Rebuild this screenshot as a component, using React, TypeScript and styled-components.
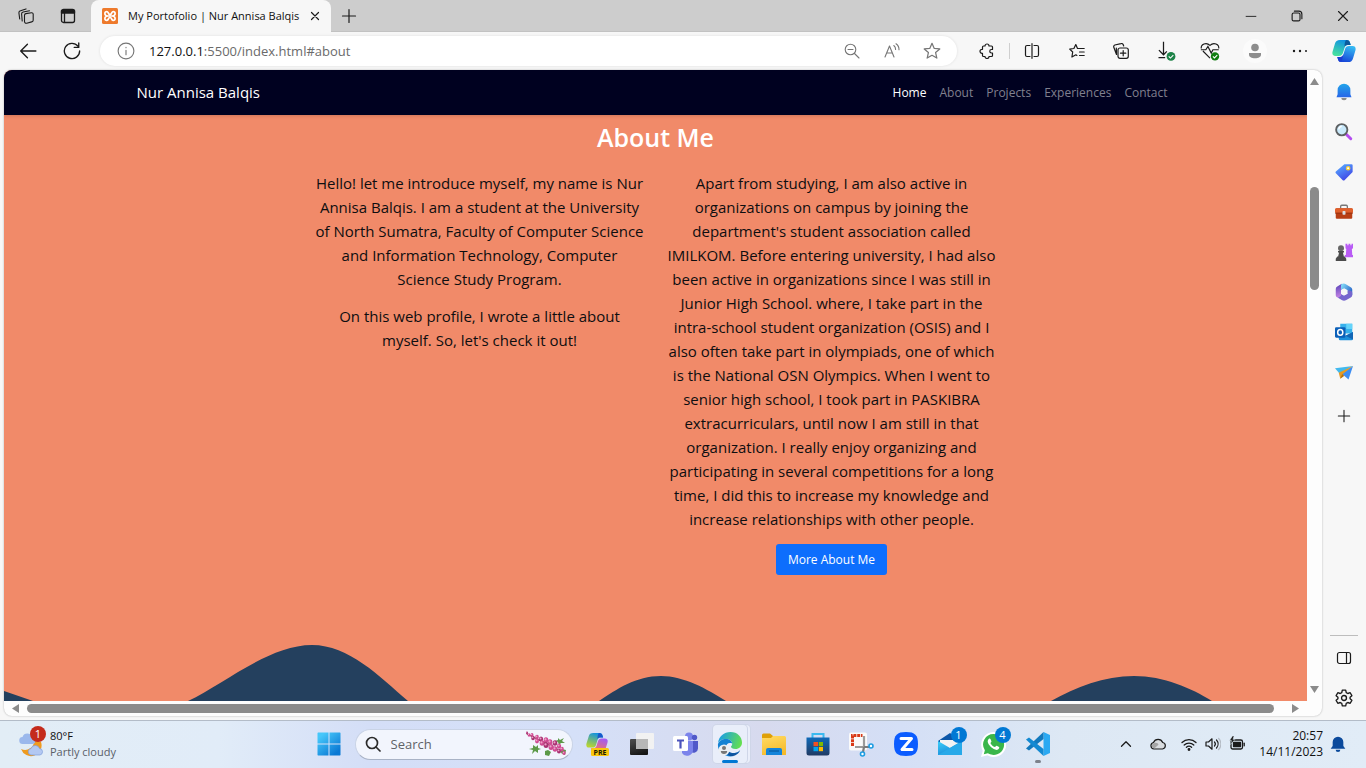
import React from "react";
import styled, { createGlobalStyle, css } from "styled-components";

const GlobalStyle = createGlobalStyle`
  *, *::before, *::after { box-sizing: border-box; }
  html, body { margin: 0; padding: 0; }
  body { font-family: "Open Sans", "Noto Sans", sans-serif; color: #111; }
  button { font: inherit; color: inherit; background: none; border: 0; padding: 0; cursor: pointer; }
  input { font: inherit; color: inherit; background: none; border: 0; padding: 0; outline: 0; min-width: 0; }
  a { color: inherit; text-decoration: none; }
  svg { display: block; flex: none; }
`;

const Desktop = styled.div`
  display: flex;
  flex-direction: column;
  height: 100vh;
  min-height: 560px;
  overflow: hidden;
  background: #f7f7f7;
`;

/* ---------- tab strip ---------- */
const TabStrip = styled.header`
  display: flex;
  flex: none;
  height: 32px;
  background: #cdcdcd;
  box-shadow: inset 0 -1px 0 #c2c2c2;
`;
const StripButtons = styled.div`
  display: flex;
  width: 91px;
  padding-left: 5px;
`;
const IconButton = styled.button<{ $width?: number }>`
  display: flex;
  align-items: center;
  justify-content: center;
  flex: none;
  width: ${(p) => p.$width ?? 44}px;
  height: 100%;
`;
const Tab = styled.div`
  display: flex;
  align-items: center;
  width: 240px;
  padding: 0 8px 0 11px;
  border-radius: 8px 8px 0 0;
  background: #f7f7f7;
`;
const TabTitle = styled.span`
  flex: 1;
  margin-left: 10px;
  font-size: 11px;
  line-height: 16px;
  white-space: nowrap;
`;
const WindowControls = styled.div`
  display: flex;
  margin-left: auto;
`;

/* ---------- toolbar ---------- */
const Toolbar = styled.div`
  display: flex;
  align-items: center;
  flex: none;
  height: 38px;
  padding-left: 6px;
`;
const AddressBar = styled.form`
  display: flex;
  align-items: center;
  flex: 1;
  height: 30px;
  margin: 0 8px 0 6px;
  padding: 0 5px 0 17px;
  border-radius: 15px;
  background: #fff;
  box-shadow: 0 0 3px rgba(0, 0, 0, 0.1);
  font-size: 13px;
  line-height: 20px;
`;
const Host = styled.label`
  margin-left: 14px;
`;
const UrlInput = styled.input`
  flex: 1;
  color: #6a6a6a;
`;
const Divider = styled.span`
  width: 1px;
  height: 16px;
  background: #cfcfcf;
`;
const ToolbarActions = styled.div`
  display: flex;
  height: 38px;
  width: 356px;
  & > button { flex: 1; width: auto; }
`;

/* ---------- browser body ---------- */
const Body = styled.div`
  display: flex;
  flex: 1;
  min-height: 0;
  padding: 0 0 4px 4px;
`;
const Frame = styled.div`
  display: grid;
  grid-template: minmax(0, 1fr) 15px / minmax(0, 1fr) 15px;
  flex: 1;
  overflow: hidden;
  border-radius: 8px;
  background: #fdfdfd;
  box-shadow: 0 0 2px rgba(0, 0, 0, 0.3);
`;
const VerticalScroll = styled.div`
  display: flex;
  flex-direction: column;
  align-items: center;
  padding: 7px 0;
`;
const HorizontalScroll = styled.div`
  display: flex;
  align-items: center;
  padding: 0 7px;
`;
const Thumb = styled.span<{ $vertical?: boolean }>`
  border-radius: 5px;
  background: #8b8b8b;
  ${(p) =>
    p.$vertical
      ? css`width: 9px; height: 103px; margin: 101px 0 auto;`
      : css`flex: 1; height: 9px; margin: 0 17px 0 7px;`}
`;
const Sidebar = styled.aside`
  display: flex;
  flex-direction: column;
  flex: none;
  width: 44px;
  padding-top: 2px;
  margin-bottom: -2px;
  & > button { height: 40px; }
`;
const AddSlot = styled.div`
  height: 40px;
  margin-top: 4px;
`;
const SidebarRule = styled.span`
  width: 28px;
  height: 1px;
  margin: auto 8px 2px;
  background: #bdbdbd;
`;

/* ---------- portfolio page ---------- */
const Page = styled.div`
  display: flex;
  flex-direction: column;
  overflow: hidden;
  background: #f18a69;
`;
const Navbar = styled.nav`
  flex: none;
  background: #000120;
  box-shadow: 0 1px 3px rgba(0, 0, 0, 0.15);
`;
const NavInner = styled.div`
  display: flex;
  align-items: center;
  justify-content: space-between;
  max-width: 1038px;
  height: 45px;
  margin: 0 auto;
  padding-right: 7px;
`;
const Brand = styled.a`
  padding-bottom: 2px;
  color: #fff;
  font-size: 15px;
  line-height: 24px;
`;
const NavLinks = styled.div`
  display: flex;
  gap: 13px;
  font-size: 12px;
  line-height: 20px;
`;
const NavLink = styled.a<{ $active?: boolean }>`
  color: ${(p) => (p.$active ? "#fff" : "#80808f")};
`;
const About = styled.section`
  flex: none;
  padding-top: 6px;
  text-align: center;
  color: #0e0e10;
`;
const Heading = styled.h1`
  margin: 0 0 18px;
  color: #fff;
  font-size: 25px;
  font-weight: 600;
  line-height: 32px;
`;
const Columns = styled.div`
  display: grid;
  grid-template-columns: repeat(2, 352px);
  justify-content: center;
  font-size: 15px;
  line-height: 24px;
`;
const Paragraph = styled.p`
  margin: 0 0 13px;
  white-space: nowrap;
`;
const MoreButton = styled.a`
  display: inline-block;
  padding: 0 12px;
  border-radius: 3px;
  background: #0d6efd;
  color: #fff;
  font-size: 12px;
  line-height: 31px;
`;
const Wave = styled.svg`
  width: 100%;
  height: 57px;
  margin-top: auto;
`;

/* ---------- taskbar ---------- */
const Taskbar = styled.footer`
  display: grid;
  grid-template-columns: 1fr auto 1fr;
  align-items: center;
  flex: none;
  height: 48px;
  padding-bottom: 1px;
  border-top: 1px solid #b3bcc8;
  background: linear-gradient(90deg, #e2edf6 0%, #e1ecf8 16%, #d4def7 27%, #d5e0f8 42%, #d7daee 56%, #d4dff6 66%, #dde8f4 78%, #e1ecf7 100%);
`;
const Weather = styled.button`
  display: flex;
  align-items: center;
  justify-self: start;
  gap: 5px;
  padding-left: 17px;
  font-size: 11px;
  line-height: 16px;
  text-align: left;
`;
const Muted = styled.span`
  display: block;
  color: #5a6068;
`;
const TaskIcons = styled.div`
  display: flex;
  align-items: center;
  height: 46px;
`;
const SearchBox = styled.label`
  display: flex;
  align-items: center;
  width: 218px;
  height: 31px;
  margin: 0 3px 0 4px;
  padding: 0 5px 0 9px;
  border: 1px solid #c9d3e6;
  border-bottom-color: #a9b3c6;
  border-radius: 16px;
  background: #f2f5fd;
  font-size: 13px;
  line-height: 18px;
  input { flex: 1; margin-left: 10px; }
  input::placeholder { color: #5f6368; opacity: 1; }
`;
const TaskButton = styled.button<{ $open?: boolean }>`
  position: relative;
  display: flex;
  align-items: center;
  justify-content: center;
  width: 44px;
  height: 46px;
  ${(p) =>
    p.$open &&
    css`
      width: 34px;
      height: 38px;
      margin: 0 5px;
      border-radius: 4px;
      background: #e9eefa;
      box-shadow: 0 0 0 1px #cfd6e8, 3px 0 0 0 #eaeefa, 3px 0 0 1px #cfd6e8;
    `}
`;
const Indicator = styled.span<{ $active?: boolean }>`
  position: absolute;
  bottom: ${(p) => (p.$active ? 0 : 4)}px;
  left: 50%;
  width: ${(p) => (p.$active ? 16 : 6)}px;
  height: 3px;
  border-radius: 2px;
  background: ${(p) => (p.$active ? "#0078d4" : "#7d828c")};
  transform: translateX(-50%);
`;
const Badge = styled.span<{ $red?: boolean }>`
  position: absolute;
  top: ${(p) => (p.$red ? -4 : 6)}px;
  right: ${(p) => (p.$red ? -1 : 5)}px;
  width: 16px;
  height: 16px;
  border-radius: 50%;
  background: ${(p) => (p.$red ? "#c42b1c" : "#0078d4")};
  color: #fff;
  font-size: 11px;
  line-height: 16px;
  text-align: center;
`;
const WeatherIcon = styled.span`
  position: relative;
  display: block;
`;
const Tray = styled.div`
  display: flex;
  align-items: center;
  justify-self: end;
  height: 46px;
  padding-right: 20px;
`;
const Clock = styled.time`
  margin: 0 7px;
  font-size: 12px;
  line-height: 16px;
  text-align: right;
  span { display: block; }
`;

/* ---------- icons ---------- */
type IconProps = { size?: number; color?: string; width?: number; children: React.ReactNode };
const Line = ({ size = 16, color = "#1b1b1b", width = 1.2, children }: IconProps) => (
  <svg width={size} height={size} viewBox="0 0 16 16" fill="none" stroke={color} strokeWidth={width} strokeLinecap="round" strokeLinejoin="round" aria-hidden="true">
    {children}
  </svg>
);
const Art = ({ size = 18, children }: { size?: number; children: React.ReactNode }) => (
  <svg width={size} height={size} viewBox="0 0 24 24" aria-hidden="true">{children}</svg>
);
const starPath = "M8 1.2l2 4.5 4.9.5-3.7 3.2 1.1 4.900L8 11.800l-4.300 2.500 1.100-4.900L1.100 6.200 6 5.700z";

const Gradient = ({ id, from, to, angle = 0 }: { id: string; from: string; to: string; angle?: number }) => (
  <linearGradient id={id} gradientTransform={`rotate(${angle} .5 .5)`}>
    <stop stopColor={from} />
    <stop offset="1" stopColor={to} />
  </linearGradient>
);

const CopilotArt = ({ size = 24, warm = false }: { size?: number; warm?: boolean }) => {
  const k = warm ? "w" : "c";
  return (
    <Art size={size}>
      <defs>
        <Gradient id={`${k}1`} from="#0f91e3" to={warm ? "#b8d432" : "#46dfa0"} angle={110} />
        <Gradient id={`${k}2`} from={warm ? "#a45cf0" : "#35b8f2"} to={warm ? "#ff7a4d" : "#1746d8"} angle={110} />
      </defs>
      <path d="M8 1h7c2 0 2.600 1.200 3.100 3l.6 2h-3c-2 0-2.700 1.300-3.300 3.200l-1.300 4.400C10.300 16 9.300 17 7 17H3.500C.6 17-.1 14.900.6 12.400L3 4.600C3.700 2.200 5 1 8 1z" fill={`url(#${k}1)`} />
      <path d="M14 1c2.600 0 3.500 1 4.100 3l.6 2h-3.300c-1.300 0-2.100.7-2.700 1.800C12.300 5 13 2.500 14 1z" fill={warm ? "#1858cc" : "#0b5b9c"} />
      <path d="M17 7h3.500c2.900 0 3.600 2.100 2.900 4.600L21 19.400C20.300 21.800 19 23 16 23H9c-2 0-2.600-1.200-3.100-3l-.6-2h3c2 0 2.700-1.300 3.300-3.200l1.300-4.400C13.700 8 14.700 7 17 7z" fill={`url(#${k}2)`} />
      <path d="M5.300 18h3c2 0 2.700-1.300 3.300-3.200L10 21c-.5 1.500-1.600 2-2.300 1.700-1-.5-1.400-1.500-1.800-2.700z" fill={warm ? "#f26a9c" : "#1b3ed0"} />
    </Art>
  );
};

const Lupin = () => (
  <svg width="42" height="26" viewBox="0 0 42 26" aria-hidden="true">
    <path d="M2 3Q18 11 40 22" stroke="#8a5a58" strokeWidth="1.300" fill="none" />
    <path fill="#5d9a48" d="M8 14l3 2 2-2 0 3 3 1-3 1 0 3-3-2-3 3 1-4-4-1 4-1zM33 7l2 2 4-2-2 3 3 2-4 0-2 2-1-3-3-1 3-1zM20 20l3-1 3 2-2 4-4-1zM37 18l4 1-1 5-4-2z" />
    {[[2, 2, 1], [4, 4, 1.400], [7, 4, 1.500], [8, 7, 1.800], [12, 6, 1.800], [12, 10, 2], [16, 8, 2.200], [17, 12, 2.300], [21, 9, 2.300], [21, 14, 2.500], [25, 11, 2.400], [26, 16, 2.500], [30, 12, 2.300], [30, 18, 2.300], [34, 15, 2.200], [34, 20, 2.100], [37, 18, 1.800], [39, 22, 1.700]].map(([x, y, r], i) => (
      <g key={i}>
        <ellipse cx={x} cy={y} rx={r} ry={r + 0.4} fill={i % 3 ? "#cf4a91" : "#a93272"} />
        <circle cx={x - 0.5} cy={y - 0.6} r={r * 0.45} fill="#eea0c8" />
      </g>
    ))}
  </svg>
);

const Arrow = ({ d, label }: { d: string; label: string }) => (
  <button type="button" aria-label={label}>
    <svg width="9" height="9" viewBox="0 0 9 9"><path d={d} fill="#8b8b8b" /></svg>
  </button>
);

const toolbarIcons: { label: string; icon: React.ReactNode }[] = [
  { label: "Split screen", icon: <Line><path d="M6 2.500H3A1.500 1.500 0 0 0 1.500 4v8A1.500 1.500 0 0 0 3 13.500h3M10 2.500h3A1.500 1.500 0 0 1 14.500 4v8a1.500 1.500 0 0 1-1.500 1.500h-3M8 .7v14.600" /></Line> },
  { label: "Favorites", icon: <Line><path d="M8.500 5.500L6.800 1.500l-1.900 4-4.200.6L3.700 9l-.8 5 4-2.200 1 .6M8.500 5.500h6.700M10.500 9h4.700M10.500 12.500h4.700" /></Line> },
  { label: "Collections", icon: <Line><rect x="5" y="5" width="10.300" height="10.300" rx="2" /><path d="M10.200 7.500v5.300M7.500 10.200h5.300M3.400 11.300L.8 4.200a1.700 1.700 0 0 1 1-2.200L8 .6a1.700 1.700 0 0 1 2.200 1.200l.5 1.200M3.500 11.400L3.300 5" /></Line> },
  { label: "Downloads", icon: <Art size={20}><path d="M9 1v15M3.500 11L9 16.500l4-4M3 20h8" fill="none" stroke="#1b1b1b" strokeWidth="1.500" /><circle cx="18" cy="18.500" r="5.300" fill="#1d8348" /><path d="M15.300 18.500l2 2 3.500-3.500" fill="none" stroke="#fff" strokeWidth="1.300" /></Art> },
  { label: "Browser essentials", icon: <Art size={20}><path d="M12 20.500L3.500 12M1.500 9C.8 4 7.500.8 12 5.300 16.500.8 23.200 4 22.500 9M1 10.500h6l2.500-4 4 8 2-4h7" fill="none" stroke="#1b1b1b" strokeWidth="1.400" /><circle cx="18" cy="18.500" r="5" fill="#107c10" /><path d="M15.500 18.500l1.800 1.800 3.400-3.400" fill="none" stroke="#fff" strokeWidth="1.300" /></Art> },
  { label: "Profile", icon: <svg width="24" height="24" viewBox="0 0 24 24"><circle cx="12" cy="12" r="12" fill="#fbfbfb" /><circle cx="12" cy="8.500" r="3.800" fill="#8d8d8d" /><path d="M6 14h12v1.500c0 2.500-2.500 3.700-6 3.700s-6-1.200-6-3.700z" fill="#8d8d8d" /></svg> },
  { label: "Settings and more", icon: <Line><g fill="#1b1b1b" stroke="none"><circle cx="3" cy="8" r="1.200" /><circle cx="9" cy="8" r="1.200" /><circle cx="15" cy="8" r="1" /></g></Line> },
  { label: "Copilot", icon: <CopilotArt /> },
];

const sidebarIcons: { label: string; icon: React.ReactNode }[] = [
  { label: "Notifications", icon: <Art><defs><Gradient id="bell" from="#22a5ea" to="#2866e8" angle={90} /></defs><path d="M12 1a8.500 8.500 0 0 0-8.500 8.500V15L2 19h20l-1.500-4V9.500A8.500 8.500 0 0 0 12 1z" fill="url(#bell)" /><path d="M8.500 20h7a3.500 3 0 0 1-7 0z" fill="#8b8b8b" /></Art> },
  { label: "Search", icon: <Art><path d="M15 15l6 6" stroke="#b44cf0" strokeWidth="4" strokeLinecap="round" /><circle cx="9" cy="9" r="7.500" fill="#c9e9fb" stroke="#5d6062" strokeWidth="2.500" /><path d="M5 8.500A4.500 4.500 0 0 1 9 4.500" stroke="#fff" strokeWidth="1.500" fill="none" /></Art> },
  { label: "Shopping", icon: <Art><defs><Gradient id="tag" from="#56a4ff" to="#3f43e4" angle={60} /></defs><path d="M12.500 1.500H22a1.500 1.500 0 0 1 1.500 1.500v9L13 22.500a2 2 0 0 1-3 0L1.500 14a2 2 0 0 1 0-3z" fill="url(#tag)" /><circle cx="17.500" cy="7" r="2.300" fill="#fff" stroke="#f4cd3c" strokeWidth="1.700" /></Art> },
  { label: "Tools", icon: <Art><path d="M7.500 7V4.500C7.500 3.500 8 3 9 3h6c1 0 1.500.5 1.500 1.500V7" fill="none" stroke="#777" strokeWidth="1.700" /><rect x="1" y="7" width="22" height="14" rx="1.500" fill="#b73e14" /><path d="M1.500 7h21A1.500 1.500 0 0 1 24 8.500V13H0V8.500A1.500 1.500 0 0 1 1.500 7z" fill="#e0602c" /><path d="M0 13h24v1H0z" fill="#8e2c0d" /><rect x="10" y="10.500" width="4" height="5" rx="1" fill="#d9dee2" /></Art> },
  { label: "Games", icon: <Art><path d="M14 1h2.500v2H18V1h2.500v2H22V1h2v6l-1.500 1 .5 8h1v3H13v-3h1.500l.5-8-1-1z" fill="#b95cf5" /><circle cx="8" cy="7" r="4" fill="#666" /><path d="M4 10.500h8v2h-1.500l1.500 6H4l1.500-6H4zM3 18h10l2 3v3H1v-3z" fill="#4b4b4b" /></Art> },
  { label: "Microsoft 365", icon: <Art><defs><Gradient id="m1" from="#7ed4f5" to="#2b67c9" angle={30} /><Gradient id="m2" from="#5b45b9" to="#d18bea" angle={80} /></defs><path d="M9 1L3 4.500A4 4 0 0 0 1 8v8c0 2 1 3 3 3.500l4 1V9l5-3z" fill="url(#m2)" /><path d="M8.500 1.500c2-1 4-1 6 0l6.500 4C22.500 6.500 23 7.500 23 9v7l-6-2.500V9.700L12 7 8 9.300V3c0-.7 0-1.200.5-1.500z" fill="url(#m1)" /><path d="M23 13v3c0 1.500-.7 2.500-2 3.300L14.500 23c-1.500.8-3.500.8-5 0L4 19.800l4-2.800V14.500l4 2.300 5-2.500V9.500l4.500 1c1 .5 1.500 1.500 1.500 2.500z" fill="#7666ce" /><path d="M12 7.500l4 2.200v4.500l-4 2.300-4-2.300V9.700z" fill="#f7f7f7" /></Art> },
  { label: "Outlook", icon: <Art><rect x="7" y="1" width="16" height="13" fill="#37b1ec" /><path d="M15 1h8v7h-8z" fill="#64d4fa" /><path d="M5 12l9 5 10-5v9a2 2 0 0 1-2 2H7a2 2 0 0 1-2-2z" fill="#1c8fdb" /><path d="M24 12v10L14 17z" fill="#1266b5" /><rect x="0" y="5.500" width="14" height="14" rx="1.500" fill="#0a5fb8" /><ellipse cx="7" cy="12.500" rx="3.400" ry="3.800" fill="none" stroke="#fff" strokeWidth="2" /></Art> },
  { label: "Drop", icon: <Art><path d="M0 7L24 4 6 14z" fill="#42b9ee" /><path d="M24 4L5 13l2 8 4-5z" fill="#e79b23" /><path d="M24 4L10 15l8 7z" fill="#3d8df2" /><path d="M9.500 15l3 2-5.500 4z" fill="#ad6c10" /></Art> },
];

const taskIcons: { label: string; icon: React.ReactNode; badge?: string; open?: boolean; running?: boolean }[] = [
  { label: "Copilot preview", icon: <svg width="24" height="24" viewBox="0 0 24 24"><CopilotArt size={22} warm /><rect x="5" y="16" width="18" height="8" rx="1.500" fill="#fbc70d" /><text x="14" y="22.500" textAnchor="middle" fontSize="7" fontWeight="700" fontFamily="Open Sans" fill="#201a00">PRE</text></svg> },
  { label: "Task view", icon: <svg width="24" height="24" viewBox="0 0 24 24"><defs><Gradient id="tv" from="#494949" to="#151515" angle={70} /></defs><rect x="0" y="7" width="18" height="16" rx="1" fill="url(#tv)" /><rect x="6" y="1" width="18" height="16" rx="1" fill="#f2f2f2" /><path d="M6 7h12v10H7a1 1 0 0 1-1-1z" fill="#b7b7b7" /></svg> },
  { label: "Teams", icon: <svg width="25" height="24" viewBox="0 0 25 24"><circle cx="16" cy="4.500" r="4" fill="#7b83eb" /><circle cx="21.500" cy="5.500" r="2.700" fill="#5059c9" /><path d="M17 9h8v7.500a4.500 4.500 0 0 1-7 3.500z" fill="#5059c9" /><path d="M9 9h11v8a6 6 0 0 1-11 4z" fill="#7b83eb" /><rect x="0" y="4" width="15" height="15" rx="1.500" fill="#fff" /><path d="M4 7.500h7v2H8.600v7H6.400v-7H4z" fill="#4b53bc" /></svg> },
  { label: "Microsoft Edge", open: true, icon: <svg width="26" height="26" viewBox="0 0 26 26"><defs><Gradient id="e1" from="#1b9fe4" to="#64e04e" angle={15} /><Gradient id="e2" from="#1784dc" to="#0b4c96" angle={90} /></defs><path d="M1 12C2 5 7 1 13.500 1 20.500 1 25 6 25 11.500c0 4-3 6.500-6.500 6.500-3 0-4.500-1.200-4.500-2.200 0-.8 1.200-1 1.200-3C15.200 10 12.500 8 9 8c-3.500 0-6.500 1.500-8 4z" fill="url(#e1)" /><path d="M1 13c1-3 4-5 8-5 3.500 0 6 2 6.200 4.500-4-1.500-6.700 1-6.200 5 .5 4 4 7.500 8 7.500C9 27 0 21.500 1 13z" fill="#1482d4" /><path d="M9.500 14c-.5 6 4 8.500 8 8 2.500-.3 4.500-1.500 5.700-3-1.700 4.500-6 6.500-9.700 6C9 24 6.500 18 9.500 14z" fill="url(#e2)" /><circle cx="7" cy="19" r="5.500" fill="#eceff2" /><circle cx="7" cy="17" r="2" fill="#777" /><path d="M3.800 20h6.400c0 2-1.200 3-3.200 3s-3.200-1-3.200-3z" fill="#777" /></svg> },
  { label: "File Explorer", icon: <svg width="24" height="24" viewBox="0 0 24 24"><defs><Gradient id="f1" from="#ffd75e" to="#f5ba2a" angle={70} /></defs><path d="M0 3a1.500 1.500 0 0 1 1.500-1.500H8L11 4v5H0z" fill="#dfa008" /><path d="M0 6h9l2-2h11.500A1.500 1.500 0 0 1 24 5.500V23H0z" fill="url(#f1)" /><path d="M4 23v-5a2 2 0 0 1 2-2h12a2 2 0 0 1 2 2v5z" fill="#1484da" /><path d="M7 19h10" stroke="#0963ad" strokeWidth="1.500" /></svg> },
  { label: "Microsoft Store", icon: <svg width="24" height="24" viewBox="0 0 24 24"><defs><Gradient id="s1" from="#0f69b8" to="#213a63" angle={90} /></defs><path d="M6.500 6V2h11v4" fill="none" stroke="#3bb9ef" strokeWidth="2" /><path d="M0.500 5.500h23V21a2.500 2.500 0 0 1-2.500 2.500H3A2.500 2.500 0 0 1 .5 21z" fill="url(#s1)" /><path d="M7.500 10H12v4.200H7.500z" fill="#f25022" /><path d="M12.800 10h4.200v4.200h-4.200z" fill="#7fba00" /><path d="M7.500 15H12v4.200H7.500z" fill="#00a4ef" /><path d="M12.800 15h4.200v4.200h-4.200z" fill="#ffb900" /></svg> },
  { label: "Snipping Tool", icon: <svg width="25" height="25" viewBox="0 0 25 25"><rect x="0" y="0.500" width="18" height="18" rx="2" fill="#fafafa" /><path d="M3.500 14V3.500h10" fill="none" stroke="#d93a18" strokeWidth="3" strokeDasharray="3 .8" /><path d="M15 4v11H6" fill="none" stroke="#9b9b9b" strokeWidth="2.200" /><path d="M15 15l-1 5M15 15h5" stroke="#7a7a7a" strokeWidth="2.200" /><circle cx="13.500" cy="22" r="2" fill="#fff" stroke="#1d9de2" strokeWidth="1.600" /><circle cx="22" cy="14" r="2" fill="#fff" stroke="#1d9de2" strokeWidth="1.600" /></svg> },
  { label: "Zoom", icon: <svg width="24" height="24" viewBox="0 0 24 24"><path d="M12 0c9 0 12 3 12 12s-3 12-12 12S0 21 0 12 3 0 12 0z" fill="#0b5cff" /><path d="M7 6.500h10.500L8 17.500h10" fill="none" stroke="#fff" strokeWidth="3" strokeLinejoin="round" strokeLinecap="round" /></svg> },
  { label: "Mail", badge: "1", icon: <svg width="24" height="24" viewBox="0 0 24 24"><defs><Gradient id="ml" from="#38c5f4" to="#1583d6" angle={60} /></defs><path d="M0 9l12-8 12 8v6H0z" fill="#0b56a8" /><path d="M2 8h20v7l-10 4L2 15z" fill="#f3f3f3" /><path d="M0 9l12 7 12-7v14H0z" fill="url(#ml)" /><path d="M0 23L16 13.500 24 9v14z" fill="#28a9e9" /></svg> },
  { label: "WhatsApp", badge: "4", icon: <svg width="25" height="25" viewBox="0 0 24 24"><path d="M12 0a12 12 0 0 0-10.300 18L0 24l6.200-1.600A12 12 0 1 0 12 0z" fill="#fff" /><path d="M12 2a10 10 0 0 0-8.300 15.500L2.700 21.300l3.900-1A10 10 0 1 0 12 2z" fill="#3ab64a" /><path d="M7.600 6.500c.6-.5 1.200-.4 1.500.2l.9 2.100c.2.500-.8 1.300-1 1.700.8 1.800 2.400 3.200 4.300 4 .5 0 1.200-1.400 1.800-1.200l2.200 1.100c.7.500-.2 2-1 2.500-3.200 1.600-9.700-4-9.900-7.700 0-1 .4-2 1.200-2.700z" fill="#fff" /></svg> },
  { label: "Visual Studio Code", running: true, icon: <svg width="24" height="24" viewBox="0 0 24 24"><path d="M17.500 0L24 3v18l-6.500 3z" fill="#2aa9f2" /><path d="M17.500 0v7L3 18.500 0 16.500z" fill="#1279bd" /><path d="M17.500 24v-7L3 5.500 0 7.500z" fill="#1389d2" /></svg> },
];

const leftText = [
  ["Hello! let me introduce myself, my name is Nur", "Annisa Balqis. I am a student at the University", "of North Sumatra, Faculty of Computer Science", "and Information Technology, Computer", "Science Study Program."],
  ["On this web profile, I wrote a little about", "myself. So, let's check it out!"],
];
const rightText = [
  ["Apart from studying, I am also active in", "organizations on campus by joining the", "department's student association called", "IMILKOM. Before entering university, I had also", "been active in organizations since I was still in", "Junior High School. where, I take part in the", "intra-school student organization (OSIS) and I", "also often take part in olympiads, one of which", "is the National OSN Olympics. When I went to", "senior high school, I took part in PASKIBRA", "extracurriculars, until now I am still in that", "organization. I really enjoy organizing and", "participating in several competitions for a long", "time, I did this to increase my knowledge and", "increase relationships with other people."],
];
const Paragraphs = ({ items }: { items: string[][] }) => (
  <>
    {items.map((lines, i) => (
      <Paragraph key={i}>
        {lines.map((line, j) => (
          <React.Fragment key={j}>{j > 0 && <br />}{line}</React.Fragment>
        ))}
      </Paragraph>
    ))}
  </>
);

export default function App() {
  return (
    <Desktop>
      <GlobalStyle />
      <TabStrip>
        <StripButtons>
          <IconButton type="button" $width={42} aria-label="Workspaces">
            <Line width={1.1}><path d="M7.800 5.600l5.700-.9a1.500 1.500 0 0 1 1.700 1.500v6a1.800 1.800 0 0 1-1.500 1.700l-5 1.300a1.700 1.700 0 0 1-2.200-1.600V7.300a1.700 1.700 0 0 1 1.300-1.700z" /><path d="M4.200 13l-.6-7a2 2 0 0 1 1.600-2l6.300-1.200M1.700 11L.9 4.800a2 2 0 0 1 1.600-2L8 .9" /></Line>
          </IconButton>
          <IconButton type="button" $width={42} aria-label="Tab actions">
            <Line width={1.3}><rect x="1.500" y="1.500" width="13" height="13" rx="2" /><path d="M1.500 2.500h13v2.500h-13z" fill="#1b1b1b" /><path d="M4.500 5v9" /></Line>
          </IconButton>
        </StripButtons>
        <Tab>
          <svg width="16" height="16" viewBox="0 0 16 16" aria-hidden="true">
            <rect width="16" height="16" rx="1.500" fill="#ee7a2c" />
            <path d="M5.500 8h5M5.800 8C1.500 7.500 2.500 2.800 5.300 3.800 6.800 4.400 6 6.500 8 6.500S9.200 4.400 10.700 3.800c2.800-1 3.800 3.700-.5 4.200 4.300.5 3.300 5.200.5 4.200-1.500-.6-.7-2.700-2.700-2.700s-1.200 2.100-2.700 2.700c-2.800 1-3.800-3.700.5-4.200z" fill="none" stroke="#fff" strokeWidth="1.700" />
          </svg>
          <TabTitle>My Portofolio | Nur Annisa Balqis</TabTitle>
          <IconButton type="button" $width={16} aria-label="Close tab"><Line size={14} width={1.400}><path d="M4 4l8 8M12 4l-8 8" /></Line></IconButton>
        </Tab>
        <IconButton type="button" $width={36} aria-label="New tab"><Line size={16}><path d="M8 1.500v13M1.500 8h13" /></Line></IconButton>
        <WindowControls>
          <IconButton type="button" $width={46} aria-label="Minimize"><Line size={12}><path d="M1.500 8.500h13" /></Line></IconButton>
          <IconButton type="button" $width={46} aria-label="Restore"><Line size={12} width={1.500}><rect x="1.500" y="4" width="10.500" height="10.500" rx="2" /><path d="M4.500 1.500h6a4 4 0 0 1 4 4v6" /></Line></IconButton>
          <IconButton type="button" $width={46} aria-label="Close"><Line size={12} width={1.500}><path d="M2 2l12 12M14 2L2 14" /></Line></IconButton>
        </WindowControls>
      </TabStrip>

      <Toolbar>
        <IconButton type="button" aria-label="Back"><Line size={18}><path d="M7.500 2L1.500 8l6 6M1.500 8h13.500" /></Line></IconButton>
        <IconButton type="button" aria-label="Refresh"><Line size={18}><path d="M14.800 8A6.800 6.800 0 1 1 13.300 3.700M14 .8v4h-4" /></Line></IconButton>
        <AddressBar onSubmit={(e) => e.preventDefault()}>
          <Line size={18} color="#767676" width={1}><circle cx="8" cy="8" r="7" /><path d="M8 7.300v4M8 4.800v.2" /></Line>
          <Host htmlFor="url">127.0.0.1</Host>
          <UrlInput id="url" defaultValue=":5500/index.html#about" />
          <IconButton type="button" $width={40} aria-label="Zoom out"><Line color="#767676" width={1.1}><circle cx="6.500" cy="6.500" r="5.300" /><path d="M10.500 10.500l4.500 4.500M4 6.500h5" /></Line></IconButton>
          <IconButton type="button" $width={40} aria-label="Read aloud"><Line color="#767676" width={1.1}><path d="M1 14L5.500 3l4.500 11M2.600 10h5.800M9.800 2.500a5 5 0 0 1 1.800 4M12 .8a7 7 0 0 1 3 6" /></Line></IconButton>
          <IconButton type="button" $width={40} aria-label="Add to favorites"><Line size={18} color="#767676" width={1.1}><path d={starPath} /></Line></IconButton>
        </AddressBar>
        <IconButton type="button" aria-label="Extensions"><Line><path d="M6 3a2 2 0 0 1 4 0h2.500a1 1 0 0 1 1 1v2.500h-1a1.700 1.700 0 0 0 0 3.500h1v2.500a1 1 0 0 1-1 1H10a2 2 0 0 1-4 0H4.500a1 1 0 0 1-1-1V10.300H3a2 2 0 0 1 0-4h.5V4a1 1 0 0 1 1-1z" /></Line></IconButton>
        <Divider />
        <ToolbarActions>
          {toolbarIcons.map((t) => <IconButton key={t.label} type="button" aria-label={t.label}>{t.icon}</IconButton>)}
        </ToolbarActions>
      </Toolbar>

      <Body>
        <Frame>
          <Page>
            <Navbar>
              <NavInner>
                <Brand href="#home">Nur Annisa Balqis</Brand>
                <NavLinks>
                  {["Home", "About", "Projects", "Experiences", "Contact"].map((n, i) => (
                    <NavLink key={n} href={`#${n.toLowerCase()}`} $active={i === 0}>{n}</NavLink>
                  ))}
                </NavLinks>
              </NavInner>
            </Navbar>
            <About id="about">
              <Heading>About Me</Heading>
              <Columns>
                <div><Paragraphs items={leftText} /></div>
                <div>
                  <Paragraphs items={rightText} />
                  <MoreButton href="#more">More About Me</MoreButton>
                </div>
              </Columns>
            </About>
            <Wave viewBox="0 0 1303 57" preserveAspectRatio="none" aria-hidden="true">
              <path fill="#24405e" d="M0 47L29 57H0zM184 57C220 40 265 1 308 1C345 1 375 32 404 57zM595 57C613 45 632 32 657 32C680 32 703 45 722 57zM1047 57C1072 43 1100 32 1130 32C1160 32 1187 44 1208 57z" />
            </Wave>
          </Page>
          <VerticalScroll>
            <Arrow d="M4.500 1L9 8H0z" label="Scroll up" />
            <Thumb $vertical />
            <Arrow d="M4.500 8L9 1H0z" label="Scroll down" />
          </VerticalScroll>
          <HorizontalScroll>
            <Arrow d="M1 4.500L8 0v9z" label="Scroll left" />
            <Thumb />
            <Arrow d="M8 4.500L1 0v9z" label="Scroll right" />
          </HorizontalScroll>
        </Frame>
        <Sidebar>
          {sidebarIcons.map((s) => <IconButton key={s.label} type="button" aria-label={s.label}>{s.icon}</IconButton>)}
          <AddSlot>
            <IconButton type="button" aria-label="Customize"><Line size={14}><path d="M8 1.500v13M1.500 8h13" /></Line></IconButton>
          </AddSlot>
          <SidebarRule />
          <IconButton type="button" aria-label="Hide sidebar"><Line><rect x="1.500" y="2.500" width="13" height="11" rx="2" /><path d="M10.500 2.500v11" /></Line></IconButton>
          <IconButton type="button" aria-label="Sidebar settings"><Line size={18}><circle cx="8" cy="8" r="2.200" /><path d="M6.500 1h3l.5 2.200 1.400.8 2.100-.7L15 5.900 13.400 7.300v1.400L15 10.100l-1.500 2.600-2.100-.7-1.400.8L9.500 15h-3L6 12.800 4.600 12l-2.100.7L1 10.100l1.600-1.400V7.300L1 5.900l1.500-2.600 2.100.7L6 3.200z" /></Line></IconButton>
        </Sidebar>
      </Body>

      <Taskbar>
        <Weather type="button">
          <WeatherIcon>
            <svg width="28" height="28" viewBox="0 0 28 28" aria-hidden="true">
              <path d="M24 12a10 10 0 1 1-20 7 9 9 0 0 0 13-9z" fill="#ee9a1f" />
              <path d="M6 14a3.500 3.500 0 0 1-.5-7 5 5 0 0 1 9.500 0 3.500 3.500 0 0 1 0 7z" fill="#9bb8ec" />
              <path d="M14 25a3.300 3.300 0 0 1 0-6.500 4.500 4.500 0 0 1 8.500 0A3.300 3.300 0 0 1 23 25z" fill="#b3c8f2" stroke="#7f9fdb" strokeWidth=".7" />
            </svg>
            <Badge $red>1</Badge>
          </WeatherIcon>
          <span>80°F<Muted>Partly cloudy</Muted></span>
        </Weather>
        <TaskIcons>
          <TaskButton type="button" aria-label="Start">
            <svg width="24" height="24" viewBox="0 0 24 24"><defs><Gradient id="win" from="#46c7fa" to="#0a79d4" angle={50} /></defs><path d="M1 .5h10.500v11H.5V1zM12.500.5H23l.5.5v10.500h-11zM.5 12.500h11v11H1l-.5-.5zM12.500 12.500h11V23l-.5.5H12.500z" fill="url(#win)" /></svg>
          </TaskButton>
          <SearchBox>
            <Line width={1.700} color="#2b2b2b"><circle cx="7" cy="7" r="5.500" /><path d="M11 11l4 4" /></Line>
            <input placeholder="Search" aria-label="Search" />
            <Lupin />
          </SearchBox>
          {taskIcons.map((t) => (
            <TaskButton key={t.label} type="button" aria-label={t.label} $open={t.open}>
              {t.icon}
              {t.badge && <Badge>{t.badge}</Badge>}
              {(t.open || t.running) && <Indicator $active={t.open} />}
            </TaskButton>
          ))}
        </TaskIcons>
        <Tray>
          <IconButton type="button" $width={32} aria-label="Hidden icons"><Line size={12} width={1.700}><path d="M2 11l6-6 6 6" /></Line></IconButton>
          <IconButton type="button" $width={32} aria-label="OneDrive"><Line width={1.200}><path d="M4 13A3.300 3.300 0 0 1 3.500 6.500a5 5 0 0 1 9.200 0A3.300 3.300 0 0 1 12.500 13z" fill="#d9dcdf" /><path d="M4 12.300A2.700 2.700 0 0 1 4 7c3-.6 4 .5 4.500 1.800L4.500 12.300z" fill="#a5a5a5" stroke="none" /></Line></IconButton>
          <IconButton type="button" $width={30} aria-label="Wi-Fi"><Line width={1.300}><path d="M1 6.500a10 10 0 0 1 14 0M3.200 9a7 7 0 0 1 9.600 0M5.400 11.300a4 4 0 0 1 5.200 0" /><circle cx="8" cy="13.500" r=".8" fill="#1b1b1b" /></Line></IconButton>
          <IconButton type="button" $width={18} aria-label="Volume"><Line><path d="M1 6h2.500L7 2.800v10.400L3.500 10H1zM9.500 6a3 3 0 0 1 0 4M11.500 4a6 6 0 0 1 0 8" /><path d="M13.500 2.300a8 8 0 0 1 0 11.400" stroke="#b5bcc5" /></Line></IconButton>
          <IconButton type="button" $width={30} aria-label="Battery"><Line width={1.300}><rect x="2" y="4" width="11.500" height="9" rx="1.700" /><path d="M4.500 6.500h7v4h-7z" fill="#1b1b1b" /><path d="M15.200 7.200v2.600" /><path d="M3.500 0L.5 4.500h2L1.500 8.500 6 3.500h-2L5 0z" fill="#1b1b1b" stroke="#e1ecf7" strokeWidth=".5" /></Line></IconButton>
          <Clock><span>20:57</span><span>14/11/2023</span></Clock>
          <IconButton type="button" $width={16} aria-label="Notifications"><Art size={16}><path d="M12 1a8 8 0 0 0-8 8v6l-3 4h22l-3-4V9a8 8 0 0 0-8-8zM8.500 20.500h7a3.500 3.500 0 0 1-7 0z" fill="#0b4a9c" /></Art></IconButton>
        </Tray>
      </Taskbar>
    </Desktop>
  );
}
